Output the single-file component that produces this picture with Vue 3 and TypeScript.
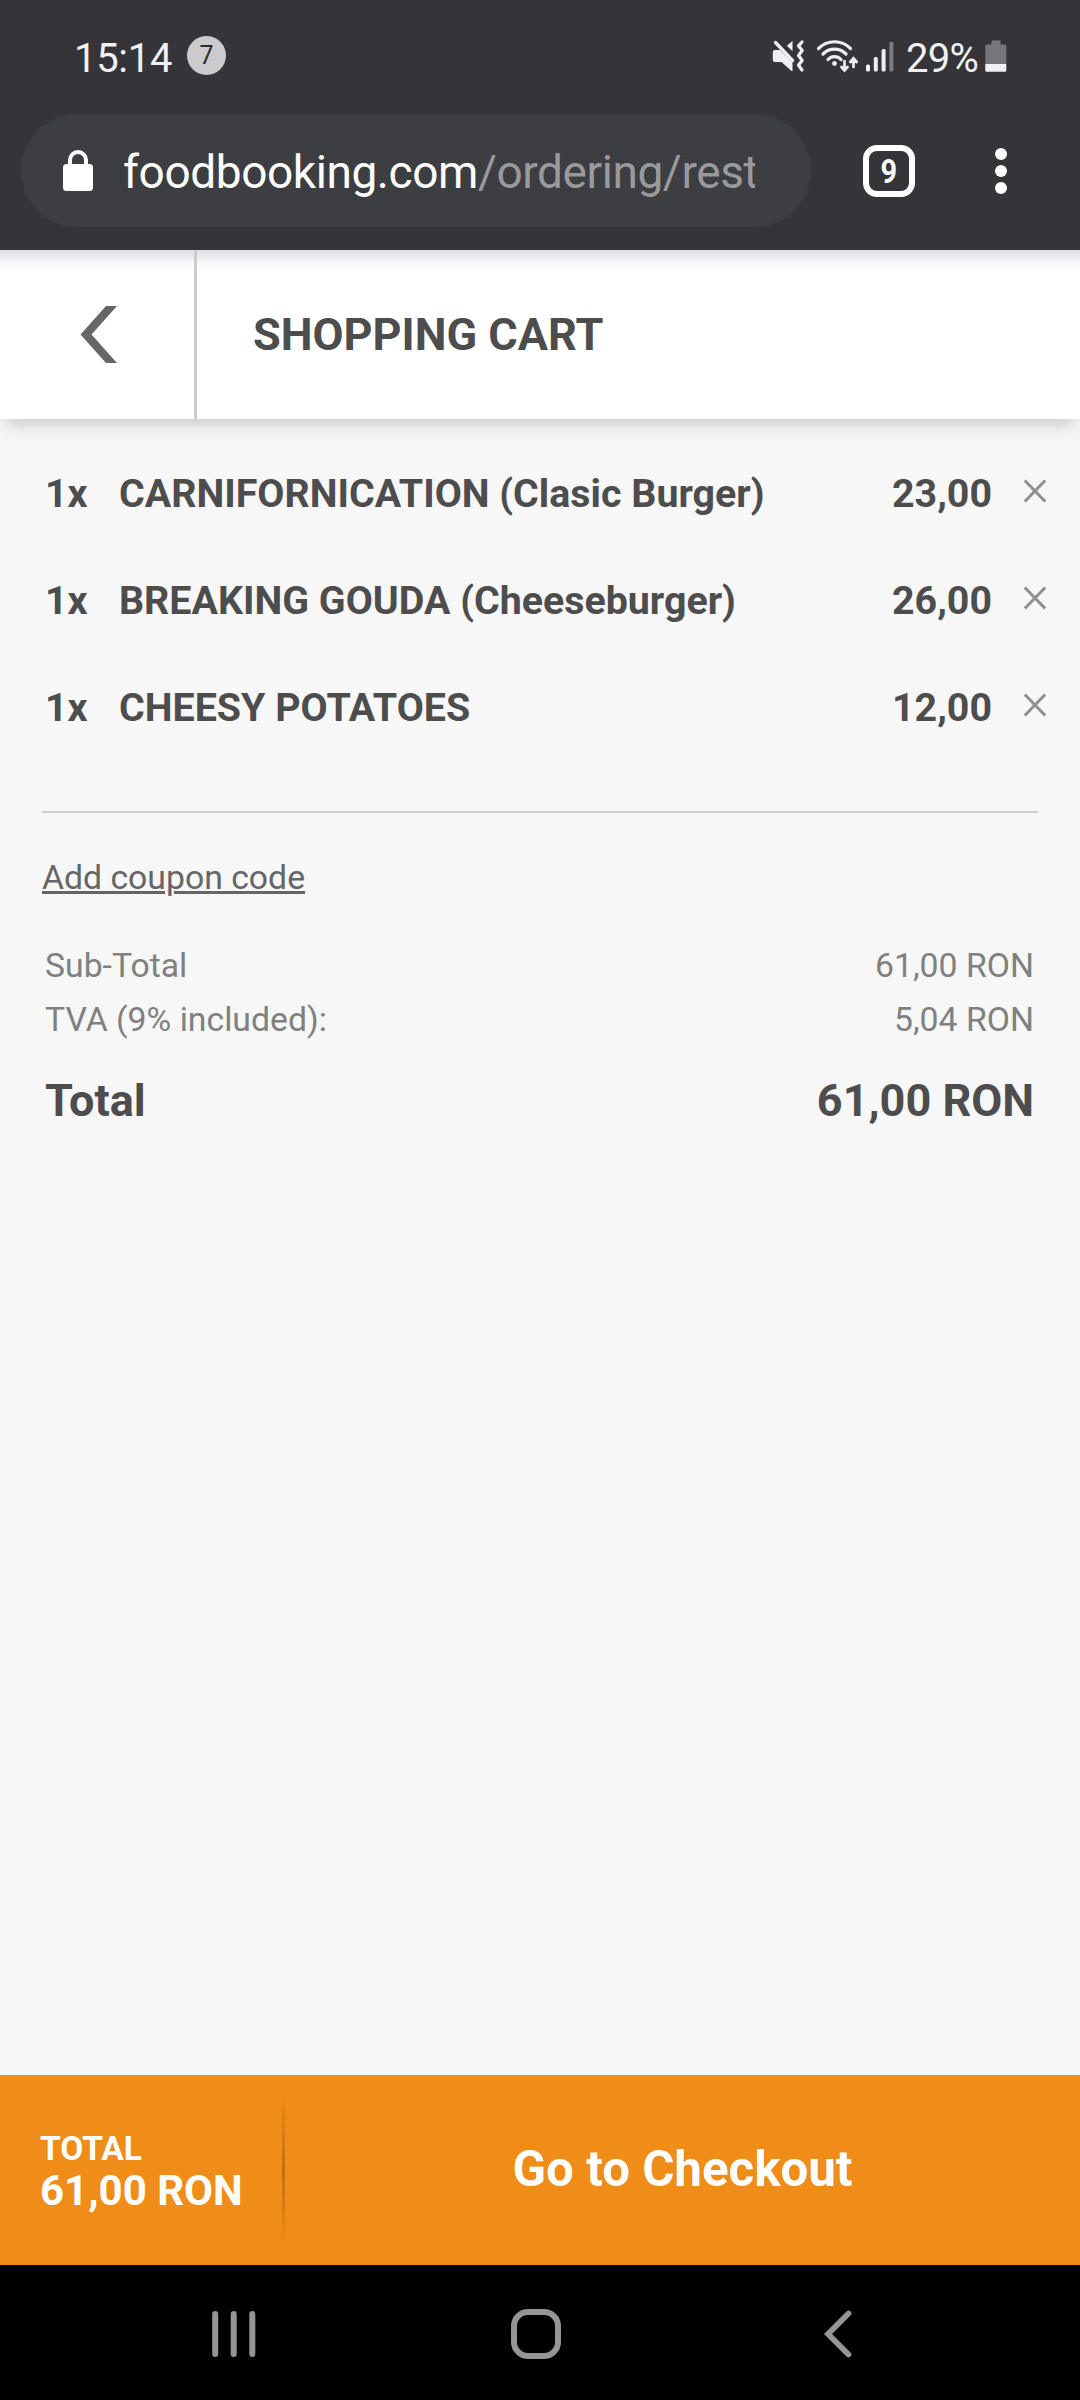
<script setup lang="ts">
interface CartItem {
  qty: number
  name: string
  price: string
}

const items: CartItem[] = [
  { qty: 1, name: 'CARNIFORNICATION (Clasic Burger)', price: '23,00' },
  { qty: 1, name: 'BREAKING GOUDA (Cheeseburger)', price: '26,00' },
  { qty: 1, name: 'CHEESY POTATOES', price: '12,00' },
]

const summary = [
  { label: 'Sub-Total', value: '61,00 RON' },
  { label: 'TVA (9% included):', value: '5,04 RON' },
]
</script>

<template>
  <div class="screen">
    <div class="browser">
      <div class="status">
        <span class="clock">15:14</span>
        <span class="badge">7</span>
        <div class="indicators">
          <!-- sound off, vibrate -->
          <svg class="mute" width="34" height="34" viewBox="0 0 34 34">
            <path d="M.8 13a2 2 0 0 1 2-2H8l12.500 12.500V32h-1L9.500 23H2.800a2 2 0 0 1-2-2z" fill="#eeeef3" />
            <path d="M20.500 2v10.300l-5.600-5.500z" fill="#eeeef3" />
            <path d="M3.500 3.500l17 18" stroke="#eeeef3" stroke-width="3.400" stroke-linecap="round" />
            <path d="M30 3l-3.500 3.800 3.700 4.700-3.700 5 3.700 5-3.700 4.500 3.500 5" fill="none" stroke="#eeeef3" stroke-width="3.200" stroke-linejoin="round" stroke-linecap="round" />
          </svg>
          <svg class="wifi" width="43" height="34" viewBox="0 0 43 34">
            <g fill="none" stroke="#eeeef3" stroke-width="3.200" stroke-linecap="round">
              <path d="M2.500 9.500c9-9 23-9 32 0" />
              <path d="M7 15c6.500-6.500 16.500-6.500 23 0" />
              <path d="M12 20.500c3.600-3.800 9.400-3.800 13 0" />
              <path d="M28.500 22v9M25.500 28l3 3.500 3-3.500M37.500 28v-8.500M34.300 23l3.200-3.700 3.200 3.700" stroke-width="2.700" />
            </g>
            <circle cx="18.500" cy="24.500" r="2.400" fill="#eeeef3" />
          </svg>
          <svg class="signal" width="28" height="34" viewBox="0 0 28 34">
            <g fill="#eeeef3">
              <rect x="0" y="25.500" width="4" height="7" rx="1.500" />
              <rect x="7.800" y="18" width="4" height="14.500" rx="1.500" />
              <rect x="15.600" y="10" width="4" height="22.500" rx="1.500" />
              <rect x="23.400" y="2.800" width="4" height="29.700" rx="1.500" fill="#7b7b7f" />
            </g>
          </svg>
          <span class="percent">29%</span>
          <svg class="battery" width="22" height="34" viewBox="0 0 22 34">
            <path d="M6.500 1.500h9v4H20a1.500 1.500 0 0 1 1.300 1.500V25H.3V7a1.500 1.500 0 0 1 1.500-1.500h4.700z" fill="#77777b" />
            <path d="M.3 25h21v6.500a1.300 1.300 0 0 1-1.300 1.300H1.600a1.300 1.300 0 0 1-1.300-1.300z" fill="#f1f1f5" />
          </svg>
        </div>
      </div>
      <div class="toolbar">
        <div class="omnibox">
          <svg class="lock" width="32" height="42" viewBox="0 0 32 42">
            <rect x="1" y="14" width="30" height="27" rx="3.500" fill="#fff" />
            <path d="M8 15V10a8 8 0 0 1 16 0v5" fill="none" stroke="#fff" stroke-width="4" />
          </svg>
          <div class="url">foodbooking.com<span class="path">/ordering/rest</span></div>
        </div>
        <div class="tabs"><span>9</span></div>
        <div class="dots"><i></i><i></i><i></i></div>
      </div>
    </div>

    <header class="header">
      <div class="back">
        <svg width="38" height="58" viewBox="0 0 38 58">
          <path d="M0.500 28.500L26 0h11L11.500 28.500 37 57H26z" fill="#666" />
        </svg>
      </div>
      <h1>SHOPPING CART</h1>
    </header>

    <main class="content">
      <div v-for="item in items" :key="item.name" class="item">
        <span class="qty">{{ item.qty }}x</span>
        <span class="name">{{ item.name }}</span>
        <span class="price">{{ item.price }}</span>
        <svg class="remove" width="24" height="24" viewBox="0 0 24 24">
          <path d="M1.800 1.500l20.400 21M22.200 1.500l-20.400 21" stroke="#8f8f8f" stroke-width="3" />
        </svg>
      </div>
      <div class="rule"></div>
      <a class="coupon">Add coupon code</a>
      <div class="summary">
        <div v-for="row in summary" :key="row.label" class="line">
          <span>{{ row.label }}</span><span>{{ row.value }}</span>
        </div>
        <div class="grand"><span>Total</span><span>61,00 RON</span></div>
      </div>
    </main>

    <footer class="checkout">
      <div class="amount">
        <span class="caption">TOTAL</span>
        <span class="value">61,00 RON</span>
      </div>
      <div class="split"></div>
      <div class="go">Go to Checkout</div>
    </footer>

    <nav class="nav">
      <svg width="46" height="48" viewBox="0 0 46 48">
        <path d="M4.200 4v40M22.700 4v40M41.300 4v40" stroke="#959595" stroke-width="6" stroke-linecap="round" />
      </svg>
      <svg class="home" width="50" height="50" viewBox="0 0 50 50">
        <rect x="3" y="3" width="44" height="44" rx="14" fill="none" stroke="#959595" stroke-width="6" />
      </svg>
      <svg class="prev" width="28" height="48" viewBox="0 0 28 48">
        <path d="M24.500 3.500L4 24l20.500 20.500" fill="none" stroke="#959595" stroke-width="5.800" stroke-linecap="round" />
      </svg>
    </nav>
  </div>
</template>

<style>
body {
  margin: 0;
}
</style>

<style scoped>
* {
  box-sizing: border-box;
}
svg {
  display: block;
  flex: none;
}
.screen {
  width: 1080px;
  height: 2400px;
  display: flex;
  flex-direction: column;
  background: #f7f7f7;
  font-family: Roboto, "Liberation Sans", sans-serif;
  color: #4d4d4d;
  overflow: hidden;
}
.browser {
  height: 250px;
  flex: none;
  background: #353539;
}
.status {
  height: 114px;
  padding: 2px 73px 0 74px;
  display: flex;
  align-items: center;
  color: #f1f1f5;
}
.clock {
  width: 113px;
  font-size: 40px;
  letter-spacing: -0.3px;
}
.badge {
  width: 39px;
  height: 39px;
  margin-bottom: 5px;
  border-radius: 50%;
  background: #cbcbcd;
  color: #2c2c30;
  font-size: 25px;
  line-height: 40px;
  text-align: center;
}
.indicators {
  margin-left: auto;
  display: flex;
  align-items: center;
}
.indicators svg {
  margin-bottom: 4px;
}
.mute {
  margin-right: 10px;
}
.wifi {
  margin-right: 7px;
}
.signal {
  margin-right: 12px;
}
.percent {
  width: 79px;
  font-size: 40px;
  white-space: nowrap;
  letter-spacing: -0.7px;
}
.toolbar {
  height: 136px;
  padding-left: 21px;
  display: flex;
}
.omnibox {
  width: 790px;
  height: 113px;
  padding: 0 56px 0 41px;
  border-radius: 57px;
  background: #3d3e41;
  display: flex;
  align-items: center;
}
.lock {
  margin-right: 29px;
}
.url {
  flex: 1;
  min-width: 0;
  overflow: hidden;
  white-space: nowrap;
  padding-top: 3px;
  font-size: 46px;
  line-height: 60px;
  letter-spacing: -0.42px;
  color: #fff;
}
.path {
  color: #9a9a9d;
}
.tabs {
  width: 52px;
  height: 52px;
  margin: 31px 0 0 52px;
  border: 6px solid #fff;
  border-radius: 14px;
  display: flex;
  align-items: center;
  justify-content: center;
  color: #fff;
  font-weight: 700;
  font-size: 34px;
  line-height: 40px;
}
.tabs span {
  transform: scaleX(0.85);
}
.dots {
  margin: 34px 0 0 80px;
  display: flex;
  flex-direction: column;
  gap: 5px;
}
.dots i {
  width: 12px;
  height: 12px;
  border-radius: 50%;
  background: #fff;
}
.header {
  height: 169px;
  flex: none;
  display: flex;
  align-items: center;
  background: linear-gradient(#dfdfe4 0, #e8e8ec 5px, #f8f8f9 13px, #fff 22px);
  box-shadow: 0 12px 16px -6px rgba(0, 0, 0, 0.18);
}
.back {
  width: 197px;
  height: 169px;
  padding-left: 80px;
  display: flex;
  align-items: center;
  border-right: 3px solid #ccc;
}
h1 {
  margin: 0 0 0 56px;
  font-size: 45px;
  line-height: 60px;
  font-weight: 700;
}
.content {
  flex: 1;
  padding: 21px 42px 0;
}
.item {
  height: 107px;
  margin-right: -9px;
  display: flex;
  align-items: center;
  font-size: 39.375px;
  font-weight: 700;
}
.qty {
  width: 77px;
  padding-left: 3px;
}
.name {
  flex: 1;
}
.remove {
  margin: 0 0 6px 31px;
}
.rule {
  height: 2px;
  margin-top: 50px;
  background: #ccc;
}
.coupon {
  display: table;
  margin-top: 45px;
  font-size: 33.75px;
  line-height: 40px;
  color: #666;
  text-decoration: underline;
  text-decoration-thickness: 3px;
}
.summary {
  padding: 40px 4px 0 3px;
}
.line {
  height: 54px;
  display: flex;
  align-items: center;
  justify-content: space-between;
  font-size: 33.75px;
  color: #808080;
}
.grand {
  height: 60px;
  margin-top: 24px;
  display: flex;
  align-items: center;
  justify-content: space-between;
  font-size: 45px;
  font-weight: 700;
}
.checkout {
  height: 190px;
  flex: none;
  display: flex;
  align-items: center;
  background: #f08c18;
  color: #fff;
  font-weight: 700;
}
.amount {
  width: 282px;
  padding: 1px 0 0 40px;
  display: flex;
  flex-direction: column;
}
.caption {
  font-size: 33.5px;
  line-height: 40px;
}
.value {
  font-size: 42px;
  line-height: 44px;
}
.split {
  width: 3px;
  height: 150px;
  background: linear-gradient(rgba(150, 80, 0, 0), rgba(150, 80, 0, 0.5), rgba(150, 80, 0, 0));
}
.go {
  flex: 1;
  padding-bottom: 3px;
  text-align: center;
  font-size: 49.22px;
}
.nav {
  height: 135px;
  flex: none;
  padding: 3px 0 0 211px;
  display: flex;
  align-items: center;
  background: #000;
}
.home {
  margin-left: 254px;
}
.prev {
  margin-left: 263px;
}
</style>
